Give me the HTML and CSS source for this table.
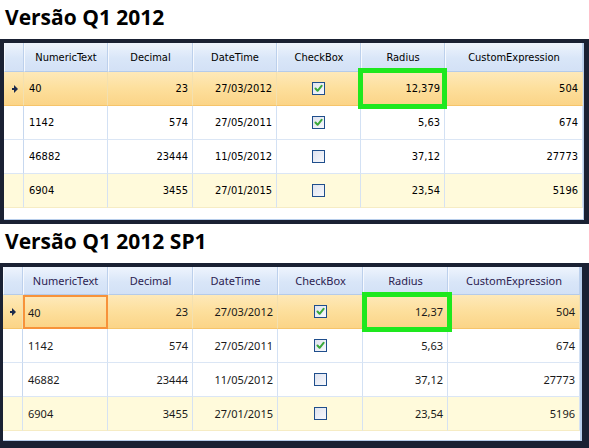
FILE: index.html
```html
<!DOCTYPE html>
<html>
<head>
<meta charset="utf-8">
<link rel="stylesheet" href="styles.css">
</head>
<body>
<section class="block">
  <h1 class="title">Versão Q1 2012</h1>
  <div class="frame frame-old">
    <div class="grid grid-old">
      <div class="hcell ind"></div>
      <div class="hcell">NumericText</div>
      <div class="hcell">Decimal</div>
      <div class="hcell">DateTime</div>
      <div class="hcell">CheckBox</div>
      <div class="hcell">Radius</div>
      <div class="hcell">CustomExpression</div>

      <div class="cell ind sel"><svg class="arrow" width="6" height="8" viewBox="0 0 6 8"><polygon points="0,3 2,3 2,0 6,4 2,8 2,5 0,5" /></svg></div>
      <div class="cell sel">40</div>
      <div class="cell sel num">23</div>
      <div class="cell sel num">27/03/2012</div>
      <div class="cell sel chk"><span class="box on"><svg width="9" height="9" viewBox="0 0 9 9"><path d="M1.5 4.5 L3.6 6.8 L7.6 1.8" /></svg></span></div>
      <div class="cell sel num">12,379</div>
      <div class="cell sel num">504</div>

      <div class="cell ind"></div>
      <div class="cell">1142</div>
      <div class="cell num">574</div>
      <div class="cell num">27/05/2011</div>
      <div class="cell chk"><span class="box on"><svg width="9" height="9" viewBox="0 0 9 9"><path d="M1.5 4.5 L3.6 6.8 L7.6 1.8" /></svg></span></div>
      <div class="cell num">5,63</div>
      <div class="cell num">674</div>

      <div class="cell ind"></div>
      <div class="cell">46882</div>
      <div class="cell num">23444</div>
      <div class="cell num">11/05/2012</div>
      <div class="cell chk"><span class="box"></span></div>
      <div class="cell num">37,12</div>
      <div class="cell num">27773</div>

      <div class="cell ind alt"></div>
      <div class="cell alt">6904</div>
      <div class="cell alt num">3455</div>
      <div class="cell alt num">27/01/2015</div>
      <div class="cell alt chk"><span class="box"></span></div>
      <div class="cell alt num">23,54</div>
      <div class="cell alt num">5196</div>
    </div>
    <div class="filler"></div>
    <div class="mark mark-old"></div>
  </div>
</section>

<section class="block">
  <h1 class="title">Versão Q1 2012 SP1</h1>
  <div class="frame frame-new">
    <div class="grid grid-new">
      <div class="hcell ind"></div>
      <div class="hcell">NumericText</div>
      <div class="hcell">Decimal</div>
      <div class="hcell">DateTime</div>
      <div class="hcell">CheckBox</div>
      <div class="hcell">Radius</div>
      <div class="hcell">CustomExpression</div>

      <div class="cell ind sel"><svg class="arrow" width="6" height="8" viewBox="0 0 6 8"><polygon points="0,3 2,3 2,0 6,4 2,8 2,5 0,5" /></svg></div>
      <div class="cell sel focus">40</div>
      <div class="cell sel num">23</div>
      <div class="cell sel num">27/03/2012</div>
      <div class="cell sel chk"><span class="box on"><svg width="9" height="9" viewBox="0 0 9 9"><path d="M1.5 4.5 L3.6 6.8 L7.6 1.8" /></svg></span></div>
      <div class="cell sel num">12,37</div>
      <div class="cell sel num">504</div>

      <div class="cell ind"></div>
      <div class="cell">1142</div>
      <div class="cell num">574</div>
      <div class="cell num">27/05/2011</div>
      <div class="cell chk"><span class="box on"><svg width="9" height="9" viewBox="0 0 9 9"><path d="M1.5 4.5 L3.6 6.8 L7.6 1.8" /></svg></span></div>
      <div class="cell num">5,63</div>
      <div class="cell num">674</div>

      <div class="cell ind"></div>
      <div class="cell">46882</div>
      <div class="cell num">23444</div>
      <div class="cell num">11/05/2012</div>
      <div class="cell chk"><span class="box"></span></div>
      <div class="cell num">37,12</div>
      <div class="cell num">27773</div>

      <div class="cell ind alt"></div>
      <div class="cell alt">6904</div>
      <div class="cell alt num">3455</div>
      <div class="cell alt num">27/01/2015</div>
      <div class="cell alt chk"><span class="box"></span></div>
      <div class="cell alt num">23,54</div>
      <div class="cell alt num">5196</div>
    </div>
    <div class="filler"></div>
    <div class="mark mark-new"></div>
  </div>
</section>
</body>
</html>
```

FILE: styles.css
```css
* { box-sizing: border-box; }
html, body { margin: 0; padding: 0; background: #ffffff; overflow: hidden; }
body { width: 589px; height: 448px; }

.block { display: flex; flex-direction: column; }

.title {
  margin: 0;
  height: 39px;
  padding: 2px 0 0 5px;
  font-family: "Open Sans", "Noto Sans", sans-serif;
  font-weight: 700;
  font-size: 21px;
  line-height: 30px;
  color: #000000;
  letter-spacing: 0;
}

.frame {
  position: relative;
  background: #1a2133;
}
.frame-old { padding: 4px 5px 4px 4px; }
.frame-new { padding: 4px 7px 4px 3px; height: 200px; }

.grid {
  display: grid;
  background: #ffffff;
  border-right: 1px solid #b7cdea;
}
.grid-old {
  grid-template-columns: 20px 84px 85px 84px 84px 84px 138px;
  grid-template-rows: 29px repeat(4, 34px);
  font-family: "DejaVu Sans Condensed", "DejaVu Sans", sans-serif;
  font-size: 11px;
  color: #000000;
}
.grid-new {
  grid-template-columns: 20px 85px 85px 85px 85px 85px 132px;
  grid-template-rows: 28px repeat(4, 34px);
  font-family: "Noto Sans", "Open Sans", sans-serif;
  font-size: 11px;
  color: #1a1a1a;
  border-right-width: 2px;
}

.hcell {
  display: flex;
  align-items: center;
  justify-content: center;
  background: linear-gradient(#eef4fd, #d9e6f8 55%, #d3e1f6);
  border-right: 1px solid #bcd0ec;
  border-bottom: 1px solid #b5cbe9;
  border-left: 1px solid #f6f9fe;
  white-space: nowrap;
}
.grid-new .hcell { color: #2c2250; }

.cell {
  display: flex;
  align-items: center;
  padding: 0 4px 0 5px;
  background: #ffffff;
  border-right: 1px solid #d3e1f4;
  border-bottom: 1px solid #dbe6f5;
  white-space: nowrap;
}
.cell.num { justify-content: flex-end; }
.cell.chk { justify-content: center; padding: 0; }
.cell.ind { justify-content: center; padding: 0; background: #ffffff; border-right-color: #c7d8ef; }
.grid-old .cell.ind.sel { padding-left: 2px; }

.cell.sel {
  background: linear-gradient(#fee9b9, #fddf9c 50%, #fbd487);
  border-bottom: 1px solid #f6c46a;
  border-right-color: #f3e0b0;
}
.cell.alt {
  background: #fffadb;
  border-bottom: 1px solid #f6ecc4;
  border-right-color: #d6e2f2;
}
.cell.ind.alt { background: #fffadb; }
.cell.focus { border: 2px solid #f7923a; padding-left: 3px; }

.arrow { fill: #1c2a4c; }

.box {
  display: flex;
  align-items: center;
  justify-content: center;
  width: 13px;
  height: 13px;
  border: 1px solid #1f4e8c;
  background: linear-gradient(135deg, #dfe3ef, #f7f8fc);
}
.box svg path {
  fill: none;
  stroke: #3aa83a;
  stroke-width: 2;
  stroke-linecap: round;
  stroke-linejoin: round;
}

.filler {
  height: 12px;
  background: #ffffff;
  border-bottom: 1px solid #b7cdea;
  border-right: 1px solid #b7cdea;
}
.frame-new .filler { height: 10px; border-right-width: 2px; }

.mark {
  position: absolute;
  border: 5px solid #1ee81e;
}
.mark-old { left: 358px; top: 29px; width: 89px; height: 41px; }
.mark-new { left: 362px; top: 29px; width: 90px; height: 40px; }
```
